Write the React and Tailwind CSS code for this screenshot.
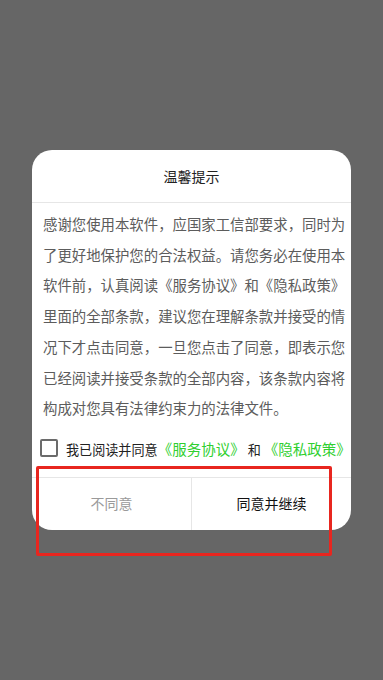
import React, { useState } from "react";

const BODY =
    "感谢您使用本软件，应国家工信部要求，同时为了更好地保护您的合法权益。请您务必在使用本软件前，认真阅读《服务协议》和《隐私政策》里面的全部条款，建议您在理解条款并接受的情况下才点击同意，一旦您点击了同意，即表示您已经阅读并接受条款的全部内容，该条款内容将构成对您具有法律约束力的法律文件。";

const FONT = { fontFamily: '"Noto Sans CJK SC", "Noto Sans", sans-serif' };

function Link({ children }) {
    return (
        <span className="text-[#2fcf2f] text-[14.5px]">
            <span className="inline-block w-[1em] text-right">《</span>
            {children}
            <span className="inline-block w-[1em] text-left">》</span>
        </span>
    );
}

export default function App() {
    const [checked, setChecked] = useState(false);

    return (
        <div className="relative w-[383px] h-[680px] bg-[#666666] overflow-hidden" style={FONT}>
            <div className="pt-[150px] px-[32px]">
                <div className="w-[319px] bg-white rounded-[20px] overflow-hidden">
                    <div className="h-[52px] flex items-center justify-center text-[14px] text-[#222]">温馨提示</div>
                    <div className="h-px bg-[#e6e6e6]"></div>
                    <p className="pl-[11px] pr-[5px] pt-[6px] text-[14.4px] leading-[30.7px] text-[#5c5c5c] break-all">
                        {BODY}
                    </p>
                    <div className="flex items-center h-[53px] pl-[8px] pb-[4px]">
                        <button
                            onClick={() => setChecked(!checked)}
                            className="w-[18px] h-[18px] border-2 border-[#6b6b6b] rounded-[2px] flex-shrink-0"
                        ></button>
                        <span className="ml-[8px] text-[13.1px] text-[#222] whitespace-nowrap">
                            我已阅读并同意<Link>服务协议</Link><span className="mx-[3px]">和</span><Link>隐私政策</Link>
                        </span>
                    </div>
                    <div className="h-px bg-[#e6e6e6]"></div>
                    <div className="flex h-[52px]">
                        <button className="flex-1 flex items-center justify-center text-[14px] text-[#9a9a9a]">不同意</button>
                        <div className="w-px bg-[#e6e6e6]"></div>
                        <button className="flex-1 flex items-center justify-center text-[14px] text-[#111]">同意并继续</button>
                    </div>
                </div>
            </div>
            {/* annotation box */}
            <div className="absolute left-[36px] top-[466px] w-[296px] h-[90px] border-[3px] border-[#e8261f] rounded-[2px] pointer-events-none"></div>
        </div>
    );
}
